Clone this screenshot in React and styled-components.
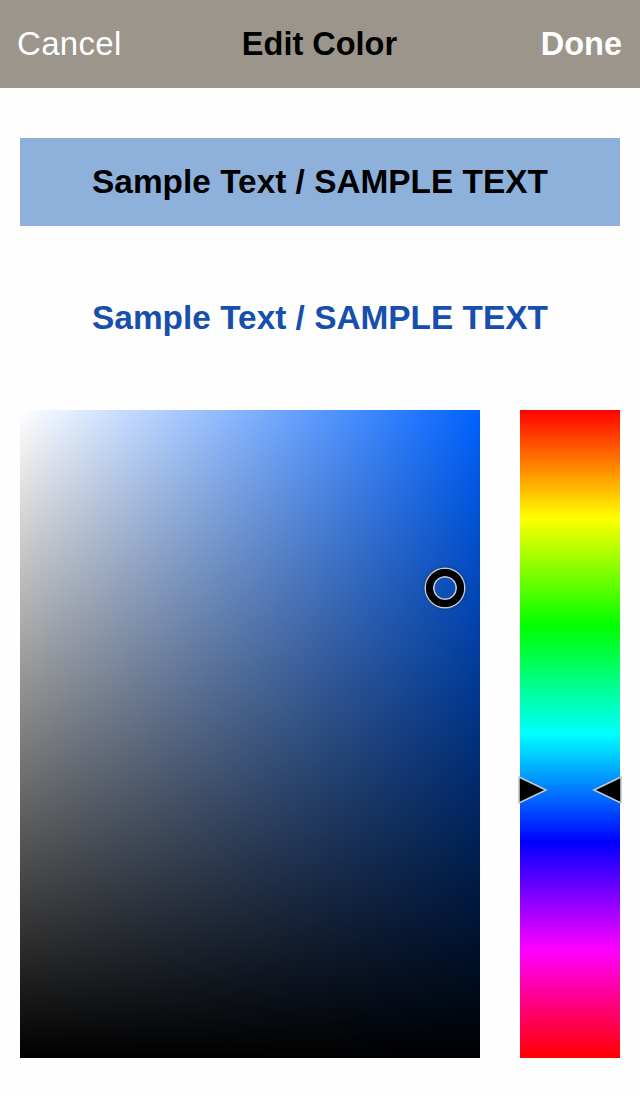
import React from 'react'
import styled, { createGlobalStyle } from 'styled-components'

const HUE = 217
const SAT = 0.924
const VAL = 0.725
const HUE_MARK = 0.587

const GlobalStyle = createGlobalStyle`
  html, body {
    margin: 0;
    padding: 0;
    background: #ffffff;
    font-family: "Liberation Sans", Arial, sans-serif;
  }
`

const Page = styled.div`
  width: 640px;
  height: 1096px;
  background: #fefefe;
  display: flex;
  flex-direction: column;
`

const NavBar = styled.div`
  height: 88px;
  background: #9b958b;
  display: grid;
  grid-template-columns: 1fr auto 1fr;
  align-items: center;
  padding: 0 18px 0 17px;
  box-sizing: border-box;
`

const NavBtn = styled.div`
  font-size: ${p => (p.bold ? '32.5px' : '33px')};
  color: #ffffff;
  font-weight: ${p => (p.bold ? 700 : 400)};
  justify-self: ${p => p.align};
  letter-spacing: ${p => (p.bold ? '0' : '0.3px')};
`

const Title = styled.div`
  font-size: 32.5px;
  font-weight: 700;
  color: #000;
`

const Content = styled.div`
  padding: 50px 20px 0;
  display: flex;
  flex-direction: column;
`

const SampleBox = styled.div`
  height: 88px;
  background: #8eb1dc;
  display: flex;
  align-items: center;
  justify-content: center;
  font-size: 33.4px;
  font-weight: 700;
  color: #000;
`

const SamplePlain = styled.div`
  height: 88px;
  margin-top: 48px;
  display: flex;
  align-items: center;
  justify-content: center;
  font-size: 33.4px;
  font-weight: 700;
  color: #164fad;
`

const PickerRow = styled.div`
  margin-top: 48px;
  display: flex;
  justify-content: space-between;
  height: 648px;
`

const SVSquare = styled.div`
  position: relative;
  width: 460px;
  height: 648px;
  background:
    linear-gradient(to bottom, rgba(0, 0, 0, 0), #000),
    linear-gradient(to right, #fff, hsl(${p => p.hue}, 100%, 50%));
`

const Knob = styled.div`
  position: absolute;
  width: 24px;
  height: 24px;
  border-radius: 50%;
  border: 7.5px solid #000;
  box-shadow: 0 0 0 1.5px #c8c8c8, inset 0 0 0 1.5px #c8c8c8, 0 0 3px 2px rgba(0, 0, 0, 0.25);
  transform: translate(-50%, -50%);
`

const HueBar = styled.div`
  position: relative;
  width: 100px;
  height: 648px;
  background: linear-gradient(
    to bottom,
    #ff0000 0%,
    #ffff00 16.667%,
    #00ff00 33.333%,
    #00ffff 50%,
    #0000ff 66.667%,
    #ff00ff 83.333%,
    #ff0000 100%
  );
`

const Arrow = styled.svg`
  position: absolute;
  top: ${p => p.y}px;
  ${p => (p.side === 'left' ? 'left: 0;' : 'right: 0;')}
  transform: translateY(-50%);
  width: 27px;
  height: 28px;
  overflow: visible;
`

export default function App() {
  const knobX = SAT * 460
  const knobY = (1 - VAL) * 648
  const hueY = HUE_MARK * 648
  return (
    <>
      <GlobalStyle />
      <Page>
        <NavBar>
          <NavBtn align="start">Cancel</NavBtn>
          <Title>Edit Color</Title>
          <NavBtn align="end" bold>Done</NavBtn>
        </NavBar>
        <Content>
          <SampleBox>Sample Text / SAMPLE TEXT</SampleBox>
          <SamplePlain>Sample Text / SAMPLE TEXT</SamplePlain>
          <PickerRow>
            <SVSquare hue={HUE}>
              <Knob style={{ left: knobX, top: knobY }} />
            </SVSquare>
            <HueBar>
              <Arrow side="left" y={hueY} viewBox="0 0 27 28">
                <polygon points="-1,1 26,14 -1,27" fill="#000" stroke="#c8c8c8" strokeWidth="1.6" />
              </Arrow>
              <Arrow side="right" y={hueY} viewBox="0 0 27 28">
                <polygon points="28,1 1,14 28,27" fill="#000" stroke="#c8c8c8" strokeWidth="1.6" />
              </Arrow>
            </HueBar>
          </PickerRow>
        </Content>
      </Page>
    </>
  )
}
